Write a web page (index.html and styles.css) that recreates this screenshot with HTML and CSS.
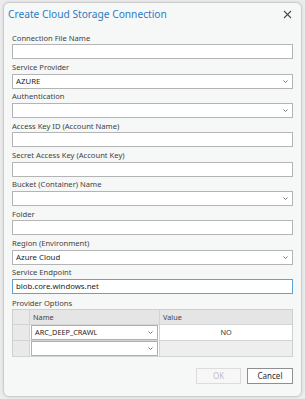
FILE: index.html
```html
<!DOCTYPE html>
<html>
<head>
<meta charset="utf-8">
<link rel="stylesheet" href="styles.css">
</head>
<body>
<div class="dialog">
  <div class="titlebar">
    <span class="title">Create Cloud Storage Connection</span>
    <svg class="close" width="9" height="9" viewBox="0 0 9 9"><path d="M1 1L8 8M8 1L1 8" stroke="#4a4a4a" stroke-width="1.1" fill="none"/></svg>
  </div>
  <div class="fields">
    <div class="label">Connection File Name</div>
    <div class="box"></div>
    <div class="label">Service Provider</div>
    <div class="box select"><span>AZURE</span><svg class="chev" width="5" height="3" viewBox="0 0 5 3"><path d="M0.5 0.5L2.5 2.5L4.5 0.5" stroke="#666" stroke-width="0.9" fill="none"/></svg></div>
    <div class="label">Authentication</div>
    <div class="box select"><span></span><svg class="chev" width="5" height="3" viewBox="0 0 5 3"><path d="M0.5 0.5L2.5 2.5L4.5 0.5" stroke="#666" stroke-width="0.9" fill="none"/></svg></div>
    <div class="label">Access Key ID (Account Name)</div>
    <div class="box"></div>
    <div class="label">Secret Access Key (Account Key)</div>
    <div class="box"></div>
    <div class="label">Bucket (Container) Name</div>
    <div class="box select"><span></span><svg class="chev" width="5" height="3" viewBox="0 0 5 3"><path d="M0.5 0.5L2.5 2.5L4.5 0.5" stroke="#666" stroke-width="0.9" fill="none"/></svg></div>
    <div class="label">Folder</div>
    <div class="box"></div>
    <div class="label">Region (Environment)</div>
    <div class="box select"><span>Azure Cloud</span><svg class="chev" width="5" height="3" viewBox="0 0 5 3"><path d="M0.5 0.5L2.5 2.5L4.5 0.5" stroke="#666" stroke-width="0.9" fill="none"/></svg></div>
    <div class="label">Service Endpoint</div>
    <div class="box focus"><span>blob.core.windows.net</span></div>
    <div class="label opts">Provider Options</div>
  </div>
  <div class="grid">
    <div class="cell rowhead hdr"></div>
    <div class="cell hdr name-h">Name</div>
    <div class="cell hdr">Value</div>
    <div class="cell rowhead"></div>
    <div class="cell combo-cell"><div class="combo"><span>ARC_DEEP_CRAWL</span><svg class="chev" width="5" height="3" viewBox="0 0 5 3"><path d="M0.5 0.5L2.5 2.5L4.5 0.5" stroke="#666" stroke-width="0.9" fill="none"/></svg></div></div>
    <div class="cell value">NO</div>
    <div class="cell rowhead"></div>
    <div class="cell combo-cell"><div class="combo"><span></span><svg class="chev" width="5" height="3" viewBox="0 0 5 3"><path d="M0.5 0.5L2.5 2.5L4.5 0.5" stroke="#666" stroke-width="0.9" fill="none"/></svg></div></div>
    <div class="cell value empty"></div>
  </div>
  <div class="buttons">
    <div class="btn disabled">OK</div>
    <div class="btn cancel">Cancel</div>
  </div>
</div>
</body>
</html>
```

FILE: styles.css
```css
html, body {
  margin: 0;
  padding: 0;
}
body {
  width: 305px;
  height: 399px;
  background: #ececec;
  font-family: "Noto Sans", "Open Sans", sans-serif;
  overflow: hidden;
}
.dialog {
  box-sizing: border-box;
  margin: 2px 0 0 3px;
  width: 299px;
  height: 395px;
  border: 1px solid #cdcdcd;
  border-radius: 6px;
  background: #f6f7f7;
  box-shadow: 0 0 3px rgba(0,0,0,0.12);
  padding: 0 8px 0 8px;
  display: flex;
  flex-direction: column;
}
.titlebar {
  height: 22px;
  display: flex;
  align-items: center;
  justify-content: space-between;
  margin: 0 -4px 0 -4px;
}
.title {
  color: #2b7bc3;
  font-size: 10.2px;
  margin-top: -1px;
}
.close {
  margin-right: 5px;
}
.fields {
  display: flex;
  flex-direction: column;
  margin-top: 5px;
}
.label {
  height: 14.34px;
  line-height: 12px;
  font-size: 7.6px;
  color: #3f3f3f;
  display: flex;
  align-items: center;
  padding-top: 1px;
  box-sizing: border-box;
}
.box {
  box-sizing: border-box;
  height: 15px;
  background: #fff;
  border: 1px solid #b4b4b4;
  display: flex;
  align-items: center;
  justify-content: space-between;
  padding: 0 4px 0 3px;
  font-size: 7.8px;
  color: #1e1e1e;
}
.box.focus {
  border-color: #5da3d9;
}
.chev {
  display: block;
}
.label.opts {
  height: 15px;
  padding-top: 3px;
}
.grid {
  display: grid;
  grid-template-columns: 17px 130px 1fr;
  grid-template-rows: 15px 16px 16px;
  border: 1px solid #cfcfcf;
  border-bottom: none;
  background: #fff;
}
.cell {
  box-sizing: border-box;
  border-right: 1px solid #d4d4d4;
  border-bottom: 1px solid #d4d4d4;
  font-size: 7.3px;
  color: #333;
  display: flex;
  align-items: center;
}
.cell:nth-child(3n) {
  border-right: none;
}
.hdr {
  background: #e5e5e5;
  padding-left: 3px;
  color: #444;
}
.rowhead {
  background: #e9e9e9;
  padding-left: 0;
}
.combo-cell {
  padding: 0 1px 0 1px;
}
.combo {
  box-sizing: border-box;
  flex: 1;
  height: 15px;
  background: #fff;
  border: 1px solid #b0b0b0;
  display: flex;
  align-items: center;
  justify-content: space-between;
  padding: 0 4px 0 3px;
  font-size: 7.3px;
  color: #222;
}
.value {
  justify-content: center;
  background: #fff;
}
.value.empty {
  background: #eeeeee;
}
.buttons {
  display: flex;
  justify-content: flex-end;
  gap: 6px;
  margin-top: 11px;
}
.btn {
  box-sizing: border-box;
  height: 16px;
  width: 46px;
  border: 1px solid #a5a5a5;
  background: #fdfdfd;
  font-size: 8px;
  color: #2a2a2a;
  display: flex;
  align-items: center;
  justify-content: center;
}
.btn.disabled {
  width: 45px;
  border-color: #dcdcdc;
  color: #c0c0c0;
  background: #f7f7f7;
}
.btn.cancel {
  border-color: #8f8f8f;
}
```
